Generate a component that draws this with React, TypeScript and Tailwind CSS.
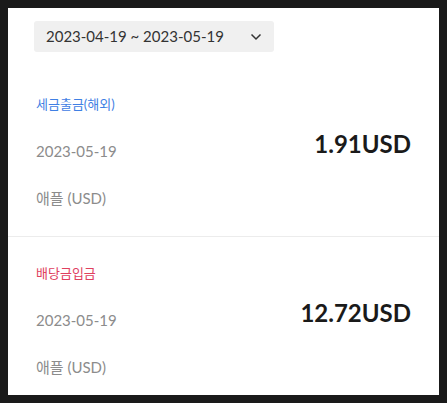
import React from 'react';

interface Tx {
  label: string;
  tone: 'blue' | 'red';
  date: string;
  amount: string;
  asset: string;
}

const txs: Tx[] = [
  { label: '세금출금(해외)', tone: 'blue', date: '2023-05-19', amount: '1.91USD', asset: '애플 (USD)' },
  { label: '배당금입금', tone: 'red', date: '2023-05-19', amount: '12.72USD', asset: '애플 (USD)' },
];

const font = { fontFamily: 'Lato, "Noto Sans CJK KR", sans-serif' };

const TxItem: React.FC<{ tx: Tx; last: boolean }> = ({ tx, last }) => (
  <div className={`px-[28px] pt-[26px] pb-[28px] ${last ? '' : 'border-b border-[#ececec]'}`}>
    <div
      className={`text-[13px] leading-[20px] ${tx.tone === 'blue' ? 'text-[#3f80e4]' : 'text-[#e0405e]'}`}
    >
      {tx.label}
    </div>
    <div className="mt-[25px] flex items-center justify-between">
      <span className="text-[15px] leading-[24px] text-[#8c8c8c]">{tx.date}</span>
      <span className="-mt-[14px] text-[24px] font-bold leading-[24px] text-[#1a1a1a]">{tx.amount}</span>
    </div>
    <div className="mt-[25px] text-[15px] leading-[20px] text-[#8c8c8c]">{tx.asset}</div>
  </div>
);

export default function App() {
  return (
    <div className="h-[403px] w-[447px] bg-[#1a1a1a] p-[8px]" style={font}>
      <div className="h-full w-full overflow-hidden bg-white">
        <div className="px-[26px] pt-[13px]">
          <button className="flex h-[31px] w-[240px] items-center justify-between rounded-[3px] bg-[#f0f0f0] pl-[12px] pr-[12px] text-[15px] text-[#333]">
            <span>2023-04-19 ~ 2023-05-19</span>
            <svg width="12" height="8" viewBox="0 0 12 8" fill="none">
              <path d="M1.5 1.5 6 6l4.5-4.5" stroke="#333" strokeWidth="1.5" />
            </svg>
          </button>
        </div>
        <div className="mt-[16px]">
          {txs.map((tx, i) => (
            <TxItem key={i} tx={tx} last={i === txs.length - 1} />
          ))}
        </div>
      </div>
    </div>
  );
}
